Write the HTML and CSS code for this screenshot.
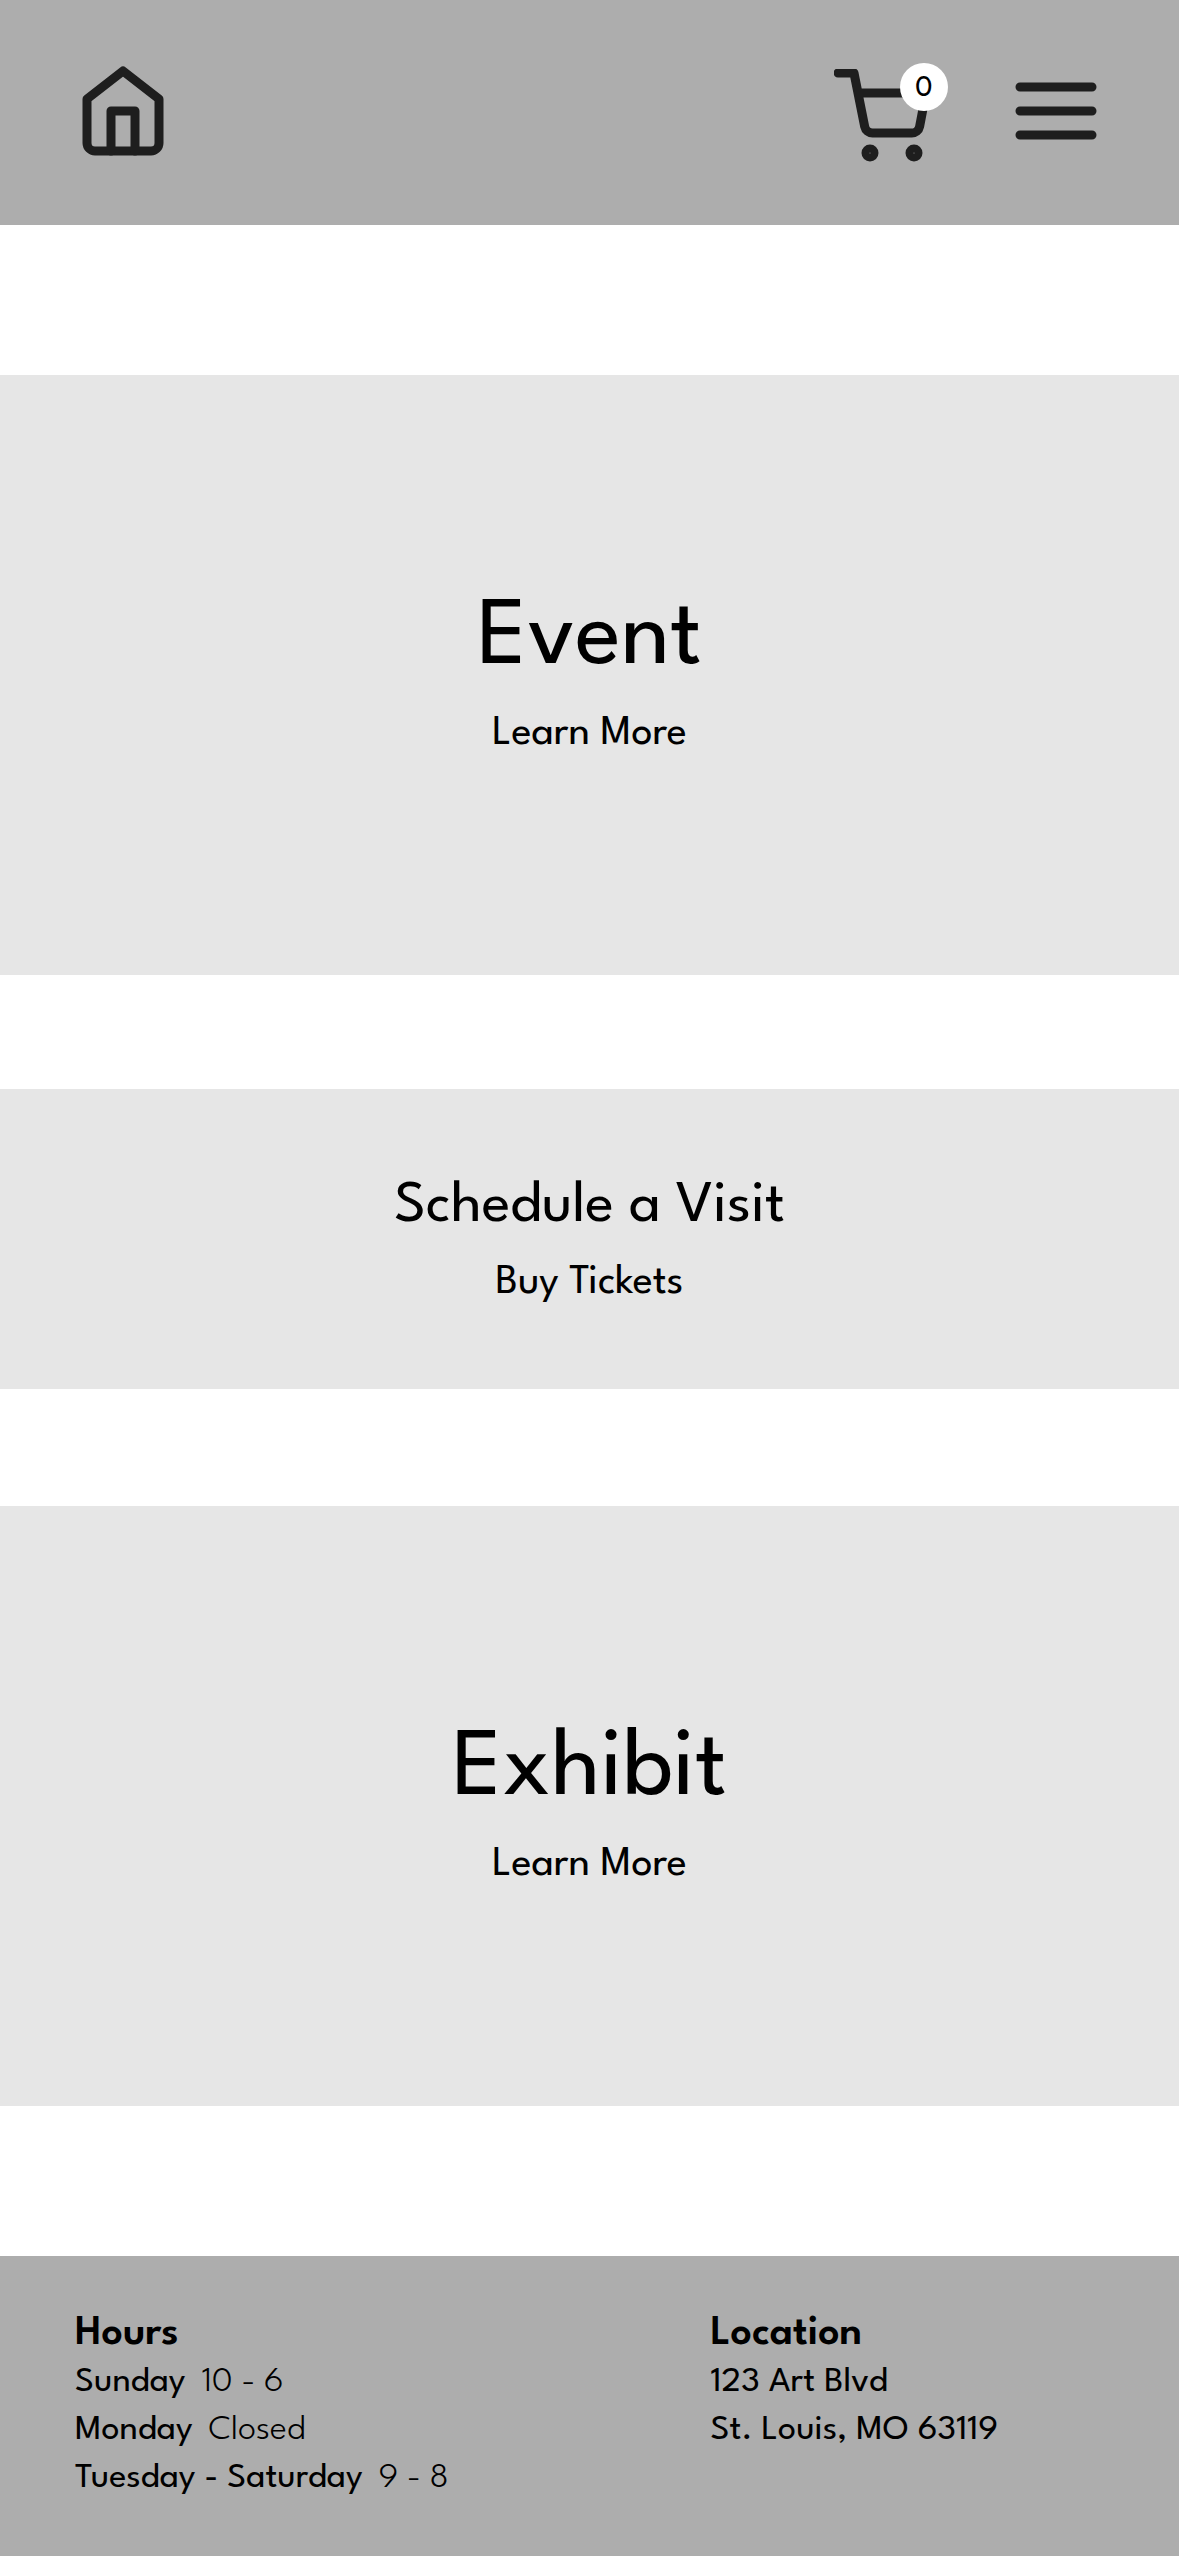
FILE: index.html
```html
<!DOCTYPE html>
<html lang="en">
<head>
    <meta charset="UTF-8">
    <meta name="viewport" content="width=device-width, initial-scale=1.0">
    <title>Art Museum</title>
    <link rel="stylesheet" href="styles.css">
</head>
<body>
    <header class="header">
        <a class="home" href="#" aria-label="Home">
            <svg class="icon" viewBox="0 0 96 96">
                <path d="M12 36 48 8l36 28v44a8 8 0 0 1-8 8H20a8 8 0 0 1-8-8z"/>
                <path d="M36 88V48h24v40"/>
            </svg>
        </a>
        <nav class="nav">
            <a class="cart" href="#" aria-label="Cart">
                <svg class="icon" viewBox="0 0 96 96">
                    <circle cx="36" cy="84" r="4"/>
                    <circle cx="80" cy="84" r="4"/>
                    <path d="M4 4h16l10.7 53.6a8 8 0 0 0 8 6.4h38.9a8 8 0 0 0 8-6.4L92 24H24"/>
                </svg>
                <span class="badge">0</span>
            </a>
            <button class="menu" type="button" aria-label="Menu">
                <svg class="icon" viewBox="0 0 96 96">
                    <path d="M12 24h72M12 48h72M12 72h72"/>
                </svg>
            </button>
        </nav>
    </header>
    <main class="main">
        <section class="banner">
            <h1>Event</h1>
            <a href="#">Learn More</a>
        </section>
        <section class="banner visit">
            <h2>Schedule a Visit</h2>
            <a href="#">Buy Tickets</a>
        </section>
        <section class="banner">
            <h1>Exhibit</h1>
            <a href="#">Learn More</a>
        </section>
    </main>
    <footer class="footer">
        <div class="hours">
            <h3>Hours</h3>
            <p>Sunday <span>10 - 6</span></p>
            <p>Monday <span>Closed</span></p>
            <p>Tuesday - Saturday <span>9 - 8</span></p>
        </div>
        <div class="location">
            <h3>Location</h3>
            <p>123 Art Blvd</p>
            <p>St. Louis, MO 63119</p>
        </div>
    </footer>
</body>
</html>
```
FILE: styles.css
```css
body {
    font-family: "League Spartan", Lato, sans-serif;
    background-color: #ffffff;
    color: #000000;
    margin: 0;
}

h1, h2, h3, p {
    margin: 0;
    font-weight: 400;
}

a {
    color: inherit;
    text-decoration: none;
}

/* header */
.header {
    background-color: #adadad;
    display: flex;
    justify-content: space-between;
    align-items: flex-start;
    padding: 63px 75px 60px;
}

.nav {
    display: flex;
    align-items: flex-start;
    gap: 60px;
}

.icon {
    display: block;
    width: 96px;
    height: 96px;
    fill: none;
    stroke: #1e1e1e;
    stroke-width: 9;
    stroke-linecap: round;
    stroke-linejoin: round;
}

.cart {
    position: relative;
    padding: 6px 18px 0 0;
}

.badge {
    position: absolute;
    top: 0;
    right: 0;
    width: 48px;
    height: 48px;
    border-radius: 50%;
    background-color: #ffffff;
    font-size: 30px;
    line-height: 53px;
    text-align: center;
}

.menu {
    background: none;
    border: none;
    padding: 0;
    cursor: pointer;
}

/* banners */
.main {
    padding: 150px 0;
}

.banner {
    background-color: #e6e6e6;
    display: flex;
    flex-direction: column;
    align-items: center;
    gap: 22px;
    padding: 217px 75px;
}

.banner h1 {
    font-size: 96px;
    line-height: 96px;
}

.banner h2 {
    font-size: 60px;
    line-height: 60px;
}

.banner a {
    font-size: 42px;
    line-height: 48px;
}

.visit {
    margin: 114px 0 117px;
    padding: 88px 75px 82px;
}

/* footer */
.footer {
    background-color: #adadad;
    display: grid;
    grid-template-columns: 21fr 13fr;
    padding: 54px 75px 53px;
    font-size: 36px;
    line-height: 48px;
}

.footer h3 {
    font-size: 42px;
    font-weight: 600;
    margin-bottom: 1px;
}

.hours span {
    font-weight: 300;
    margin-left: 7px;
}
```
